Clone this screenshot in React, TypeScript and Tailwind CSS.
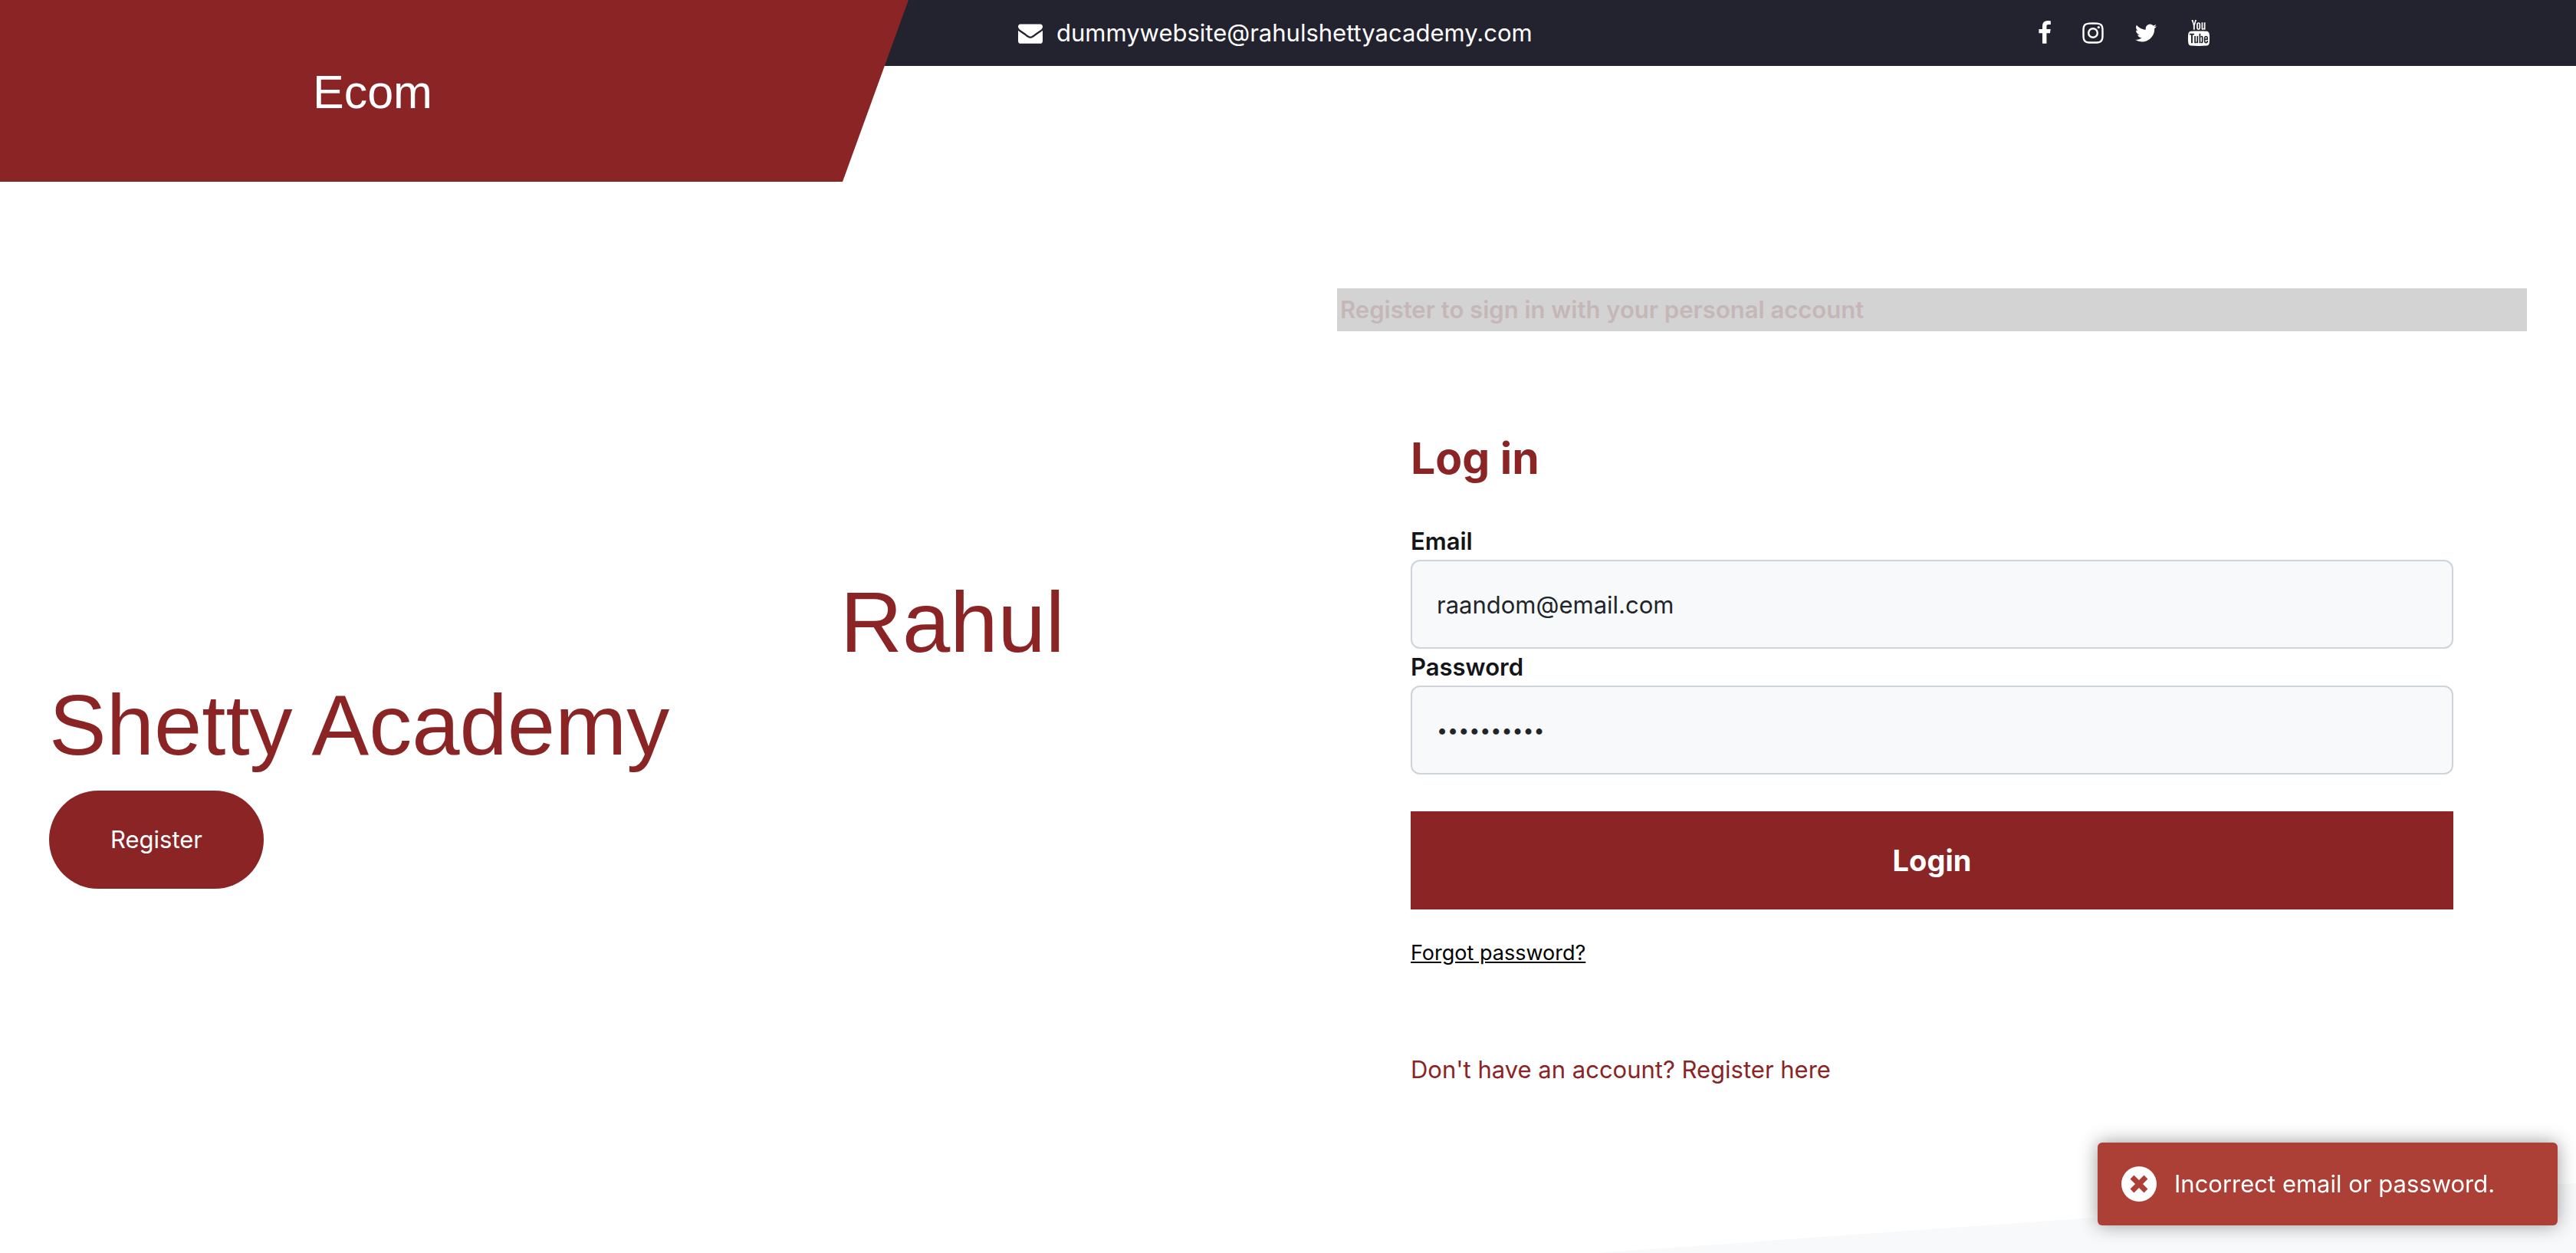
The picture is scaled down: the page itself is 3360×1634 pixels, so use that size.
import React from "react";
import { TfiYoutube } from "react-icons/tfi";

const icons = {
  envelope:
    "M1792 710v794q0 66-47 113t-113 47h-1472q-66 0-113-47t-47-113v-794q44 49 101 87 362 246 497 345 57 42 92.5 65.5t94.5 48 110 24.5h2q51 0 110-24.5t94.5-48 92.5-65.5q170-123 498-345 57-39 100-87zm0-294q0 79-49 151t-122 123q-376 261-468 325-10 7-42.5 31t-54 38.5-52 32.5-57.5 27-50 9h-2q-23 0-50-9t-57.5-27-52-32.5-54-38.5-42.5-31q-91-64-262-182.5t-205-142.5q-62-42-117-115.5t-55-136.5q0-78 41.5-130t118.5-52h1472q65 0 112.5 47t47.5 113z",
  facebook:
    "M1343 12v264h-157q-86 0-116 36t-30 108v189h293l-39 296h-254v759h-306v-759h-255v-296h255v-218q0-186 104-288.5t277-102.5q147 0 228 12z",
  instagram:
    "M1152 896q0-106-75-181t-181-75-181 75-75 181 75 181 181 75 181-75 75-181zm138 0q0 164-115 279t-279 115-279-115-115-279 115-279 279-115 279 115 115 279zm108-410q0 38-27 65t-65 27-65-27-27-65 27-65 65-27 65 27 27 65zm-502-220q-7 0-76.5-.5t-105.5 0-96.5 3-103 10-71.5 18.5q-50 20-88 58t-58 88q-11 29-18.5 71.5t-10 103-3 96.5 0 105.5.5 76.5-.5 76.5 0 105.5 3 96.5 10 103 18.5 71.5q20 50 58 88t88 58q29 11 71.5 18.5t103 10 96.5 3 105.5 0 76.5-.5 76.5.5 105.5 0 96.5-3 103-10 71.5-18.5q50-20 88-58t58-88q11-29 18.5-71.5t10-103 3-96.5 0-105.5-.5-76.5.5-76.5 0-105.5-3-96.5-10-103-18.5-71.5q-20-50-58-88t-88-58q-29-11-71.5-18.5t-103-10-96.5-3-105.5 0-76.5.5zm768 630q0 229-5 317-10 208-124 322t-322 124q-88 5-317 5t-317-5q-208-10-322-124t-124-322q-5-88-5-317t5-317q10-208 124-322t322-124q88-5 317-5t317 5q208 10 322 124t124 322q5 88 5 317z",
  twitter:
    "M1684 408q-67 98-162 167 1 14 1 42 0 130-38 259.5t-115.5 248.5-184.5 210.5-258 146-323 54.5q-271 0-496-145 35 4 78 4 225 0 401-138-105-2-188-64.5t-114-159.5q33 5 61 5 43 0 85-11-112-23-185.5-111.5t-73.5-205.5v-4q68 38 146 41-66-44-105-115t-39-154q0-88 44-163 121 149 294.5 238.5t371.5 99.5q-8-38-8-74 0-134 94.5-228.5t228.5-94.5q140 0 236 102 109-21 205-78-37 115-142 178 93-10 186-50z",
};

function Header() {
  return (
    <header className="grid grid-cols-[1185fr_2175fr] items-start">
      <div className="z-10 flex h-[237px] items-center bg-[#8a2425] pt-1 pl-[408px] font-['Liberation_Sans',Arial,sans-serif] text-[61px] text-white [clip-path:polygon(0_0,100%_0,calc(100%-86px)_100%,0_100%)]">
        <a href="#home">Ecom</a>
      </div>
      <div className="-ml-[90px] flex h-[86px] items-center justify-between bg-[#232330] pr-[478px] pl-[233px] text-white">
        <a href="mailto:dummywebsite@rahulshettyacademy.com" className="flex items-center gap-[18px]">
          <svg viewBox="0 0 1792 1792" className="size-8" fill="currentColor" aria-hidden="true">
            <path d={icons.envelope} />
          </svg>
          dummywebsite@rahulshettyacademy.com
        </a>
        <nav className="flex items-center gap-10" aria-label="Social media">
          <a href="#facebook" aria-label="Facebook">
            <svg viewBox="400 0 1008 1792" className="h-8 w-[18px]" fill="currentColor">
              <path d={icons.facebook} />
            </svg>
          </a>
          <a href="#instagram" aria-label="Instagram">
            <svg viewBox="128 0 1536 1792" className="h-8 w-[28px]" fill="currentColor">
              <path d={icons.instagram} />
            </svg>
          </a>
          <a href="#twitter" aria-label="Twitter">
            <svg viewBox="64 0 1664 1792" className="h-8 w-[30px]" fill="currentColor">
              <path d={icons.twitter} />
            </svg>
          </a>
          <a href="#youtube" aria-label="YouTube" className="flex w-7 justify-center">
            <TfiYoutube className="size-[34px] shrink-0" />
          </a>
        </nav>
      </div>
    </header>
  );
}

type FieldProps = { id: string; label: string; type: string; value: string; textClass: string };

function Field({ id, label, type, value, textClass }: FieldProps) {
  return (
    <div className="flex flex-col">
      <label htmlFor={id} className="h-12 leading-[48px] font-semibold text-[#141519]">
        {label}
      </label>
      <input
        id={id}
        type={type}
        defaultValue={value}
        className={`h-[116px] w-full rounded-xl border-2 border-[#ced4da] bg-[#f8f9fb] px-8 text-[#212529] outline-none ${textClass}`}
      />
    </div>
  );
}

function LoginPanel() {
  return (
    <section className="mr-16 ml-16 h-[1152px]">
      <p className="h-14 bg-[#d3d3d3] px-1 leading-[56px] font-semibold text-[#c5b7b7]">
        Register to sign in with your personal account
      </p>
      <form className="px-24 pt-[130px]" onSubmit={(e) => e.preventDefault()}>
        <h2 className="mb-12 text-[57px] leading-[72px] font-bold text-[#8a2425]">Log in</h2>
        <Field id="email" label="Email" type="email" value="raandom@email.com" textClass="text-[31px]" />
        <Field id="password" label="Password" type="password" value="randompass" textClass="text-[25px]" />
        <button type="submit" className="mt-12 h-32 w-full bg-[#8a2425] text-[38px] font-bold text-white">
          Login
        </button>
        <div className="mt-8">
          <a href="#forgot" className="text-[27px] leading-[48px] text-black underline">
            Forgot password?
          </a>
        </div>
        <p className="mt-[104px] leading-[48px] text-[#8a2425]">
          <a href="#register">Don't have an account? Register here</a>
        </p>
      </form>
    </section>
  );
}

function Toast() {
  return (
    <div
      role="alert"
      className="fixed right-6 bottom-9 flex h-[108px] w-[600px] items-center gap-[22px] rounded-md bg-[#ac4036] pl-[30px] text-white shadow-[0_0_24px_#999]"
    >
      <svg viewBox="0 0 48 48" className="size-12" aria-hidden="true">
        <circle cx="24" cy="24" r="23" fill="#fff" />
        <path d="M15 15l18 18M33 15L15 33" stroke="#ac4036" strokeWidth="7" />
      </svg>
      Incorrect email or password.
    </div>
  );
}

export default function App() {
  return (
    <div className="flex min-h-screen flex-col bg-white font-[Inter,sans-serif] text-[31px]">
      <Header />
      <main className="grid grid-cols-2 items-center pt-[139px]">
        <section className="pl-16">
          <h1 className="indent-[1032px] font-['Liberation_Sans',Arial,sans-serif] text-[112px] leading-[134px] text-[#8a2425]">
            Rahul Shetty Academy
          </h1>
          <button type="button" className="mt-[18px] h-32 rounded-full bg-[#8a2425] px-20 text-white">
            Register
          </button>
        </section>
        <LoginPanel />
      </main>
      <footer className="mt-auto h-[91px] w-[38%] self-end bg-[#f8f9fa] [clip-path:polygon(0_100%,100%_0,100%_100%)]" />
      <Toast />
    </div>
  );
}
